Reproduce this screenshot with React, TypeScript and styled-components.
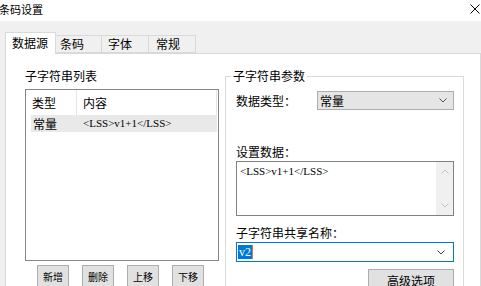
import styled, { createGlobalStyle } from "styled-components";

const GlobalStyle = createGlobalStyle`
  html, body {
    margin: 0;
    padding: 0;
    background: #f0f0f0;
  }
  body {
    font-family: "Noto Sans CJK SC", "Microsoft YaHei", sans-serif;
    font-size: 12px;
    color: #000;
  }
`;

const Window = styled.div`
  width: 481px;
  height: 286px;
  overflow: hidden;
  background: #f0f0f0;
`;

const TitleBar = styled.div`
  height: 21px;
  background: #fff;
  display: flex;
  align-items: center;
  justify-content: space-between;
`;

const Title = styled.span`
  margin-left: -1px;
  font-size: 11px;
  line-height: 16px;
  margin-top: -4px;
`;

const CloseIcon = styled.svg`
  margin-right: 1px;
  margin-top: -4px;
`;

const Body = styled.div`
  padding: 11px 0 0 5px;
`;

const TabStrip = styled.div`
  display: flex;
  align-items: flex-end;
  height: 21px;
`;

const Tab = styled.div<{ $active?: boolean; $w: number; $pl: number }>`
  box-sizing: border-box;
  width: ${(p) => p.$w}px;
  height: ${(p) => (p.$active ? 22 : 18)}px;
  margin-left: ${(p) => (p.$active ? 0 : -1)}px;
  margin-bottom: ${(p) => (p.$active ? -1 : 0)}px;
  padding-left: ${(p) => p.$pl}px;
  border: 1px solid #d9d9d9;
  border-bottom: ${(p) => (p.$active ? "none" : "1px solid #d9d9d9")};
  background: ${(p) => (p.$active ? "#fff" : "#f0f0f0")};
  line-height: ${(p) => (p.$active ? 20 : 16)}px;
  position: relative;
  z-index: ${(p) => (p.$active ? 1 : 0)};
  white-space: nowrap;
`;

const Panel = styled.div`
  box-sizing: border-box;
  width: 476px;
  height: 260px;
  background: #fff;
  border: 1px solid #d9d9d9;
  display: flex;
  align-items: flex-start;
  padding: 14px 0 0 19px;
`;

const LeftColumn = styled.div`
  width: 194px;
  display: flex;
  flex-direction: column;
`;

const Caption = styled.div`
  line-height: 16px;
  white-space: nowrap;
`;

const ListBox = styled.div`
  box-sizing: border-box;
  margin-top: 5px;
  height: 172px;
  border: 1px solid #828790;
  padding-left: 5px;
`;

const ListHeader = styled.div`
  display: flex;
  height: 25px;
  align-items: center;
`;

const HeaderCell = styled.div<{ $w: number; $pl: number }>`
  box-sizing: border-box;
  width: ${(p) => p.$w}px;
  height: 25px;
  line-height: 25px;
  padding-left: ${(p) => p.$pl}px;
  border-right: 1px solid #e5e5e5;
`;

const ListRow = styled.div<{ $selected?: boolean }>`
  display: flex;
  height: 17px;
  line-height: 17px;
  width: 186px;
  background: ${(p) => (p.$selected ? "#e9e9e9" : "transparent")};
`;

const RowCell = styled.div<{ $w: number; $pl: number; $serif?: boolean }>`
  box-sizing: border-box;
  width: ${(p) => p.$w}px;
  padding-left: ${(p) => p.$pl}px;
  font-family: ${(p) =>
    p.$serif ? '"Liberation Serif", "Noto Sans CJK SC", serif' : "inherit"};
  font-size: ${(p) => (p.$serif ? 11 : 12)}px;
  white-space: nowrap;
`;

const ButtonRow = styled.div`
  display: flex;
  gap: 13px;
  margin-top: 4px;
  padding-left: 12px;
`;

const SmallButton = styled.button`
  box-sizing: border-box;
  width: 32px;
  height: 22px;
  padding: 0;
  border: 1px solid #adadad;
  background: #e1e1e1;
  font-family: "Noto Sans CJK SC", sans-serif;
  font-size: 10px;
  color: #000;
`;

const GroupBox = styled.fieldset`
  box-sizing: border-box;
  width: 239px;
  height: 260px;
  margin: 0 0 0 6px;
  padding: 0;
  border: 1px solid #d9d9d9;
  min-width: 0;
`;

const Legend = styled.legend`
  margin-left: 5px;
  padding: 0 2px;
  line-height: 16px;
  font-size: 12px;
`;

const GroupContent = styled.div`
  display: flex;
  flex-direction: column;
  padding: 0 8px 0 10px;
`;

const FieldRow = styled.div`
  display: flex;
  align-items: center;
  margin-top: 7px;
`;

const FieldLabel = styled.div<{ $w?: number; $mt?: number }>`
  width: ${(p) => (p.$w ? `${p.$w}px` : "auto")};
  margin-top: ${(p) => p.$mt ?? 0}px;
  line-height: 16px;
  white-space: nowrap;
`;

const SelectBox = styled.div`
  box-sizing: border-box;
  width: 137px;
  height: 19px;
  border: 1px solid #adadad;
  background: #e5e5e5;
  display: flex;
  align-items: center;
  justify-content: space-between;
  padding: 0 6px 0 2px;
`;

const TextArea = styled.div`
  box-sizing: border-box;
  margin-top: 1px;
  width: 218px;
  height: 55px;
  border: 1px solid #828282;
  display: flex;
`;

const TextAreaText = styled.div`
  flex: 1;
  padding: 2px 3px;
  font-family: "Liberation Serif", serif;
  font-size: 11px;
  line-height: 14px;
`;

const ScrollBar = styled.div`
  width: 17px;
  background: #f0f0f0;
  display: flex;
  flex-direction: column;
  justify-content: space-between;
  align-items: center;
  padding: 7px 0;
`;

const Combo = styled.div`
  box-sizing: border-box;
  margin-top: 1px;
  width: 218px;
  height: 20px;
  border: 1px solid #0078d7;
  background: #fff;
  display: flex;
  align-items: center;
  justify-content: space-between;
  padding: 0 8px 0 1px;
`;

const Selected = styled.span`
  display: inline-flex;
  align-items: center;
  height: 14px;
  padding: 0 1px;
  background: #0078d7;
  color: #fff;
  font-family: "Liberation Serif", serif;
  font-size: 12px;
  border-right: 1px solid #e07b2c;
`;

const BigButton = styled.button`
  box-sizing: border-box;
  align-self: flex-end;
  margin: 7px 1px 0 0;
  width: 86px;
  height: 23px;
  padding: 0;
  border: 1px solid #adadad;
  background: #e1e1e1;
  font-family: "Noto Sans CJK SC", sans-serif;
  font-size: 12px;
  color: #000;
`;

const Chevron = ({ up, color = "#444" }: { up?: boolean; color?: string }) => (
  <svg width="8" height="5" viewBox="0 0 8 5">
    <path
      d={up ? "M0.5 4.5 L4 1 L7.5 4.5" : "M0.5 0.5 L4 4 L7.5 0.5"}
      fill="none"
      stroke={color}
      strokeWidth="1"
    />
  </svg>
);

const tabs = [
  { label: "数据源", w: 51, pl: 6, active: true },
  { label: "条码", w: 47, pl: 4 },
  { label: "字体", w: 48, pl: 6 },
  { label: "常规", w: 48, pl: 7 },
];

const buttons = ["新增", "删除", "上移", "下移"];

export default function App() {
  return (
    <Window>
      <GlobalStyle />
      <TitleBar>
        <Title>条码设置</Title>
        <CloseIcon width="10" height="10" viewBox="0 0 10 10">
          <path d="M0.5 0.5 L9.5 9.5 M9.5 0.5 L0.5 9.5" stroke="#000" strokeWidth="1" />
        </CloseIcon>
      </TitleBar>
      <Body>
        <TabStrip>
          {tabs.map((t) => (
            <Tab key={t.label} $active={t.active} $w={t.w} $pl={t.pl}>
              {t.label}
            </Tab>
          ))}
        </TabStrip>
        <Panel>
          <LeftColumn>
            <Caption>子字符串列表</Caption>
            <ListBox>
              <ListHeader>
                <HeaderCell $w={46} $pl={1}>类型</HeaderCell>
                <HeaderCell $w={140} $pl={6}>内容</HeaderCell>
              </ListHeader>
              <ListRow $selected>
                <RowCell $w={46} $pl={2}>常量</RowCell>
                <RowCell $w={140} $pl={6} $serif>
                  {"<LSS>v1+1</LSS>"}
                </RowCell>
              </ListRow>
            </ListBox>
            <ButtonRow>
              {buttons.map((b) => (
                <SmallButton key={b}>{b}</SmallButton>
              ))}
            </ButtonRow>
          </LeftColumn>
          <GroupBox>
            <Legend>子字符串参数</Legend>
            <GroupContent>
              <FieldRow>
                <FieldLabel $w={81}>数据类型：</FieldLabel>
                <SelectBox>
                  <span>常量</span>
                  <Chevron color="#555" />
                </SelectBox>
              </FieldRow>
              <FieldLabel $mt={34}>设置数据：</FieldLabel>
              <TextArea>
                <TextAreaText>{"<LSS>v1+1</LSS>"}</TextAreaText>
                <ScrollBar>
                  <Chevron up color="#c2c2c2" />
                  <Chevron color="#c2c2c2" />
                </ScrollBar>
              </TextArea>
              <FieldLabel $mt={9}>子字符串共享名称：</FieldLabel>
              <Combo>
                <Selected>v2</Selected>
                <Chevron color="#444" />
              </Combo>
              <BigButton>高级选项</BigButton>
            </GroupContent>
          </GroupBox>
        </Panel>
      </Body>
    </Window>
  );
}
